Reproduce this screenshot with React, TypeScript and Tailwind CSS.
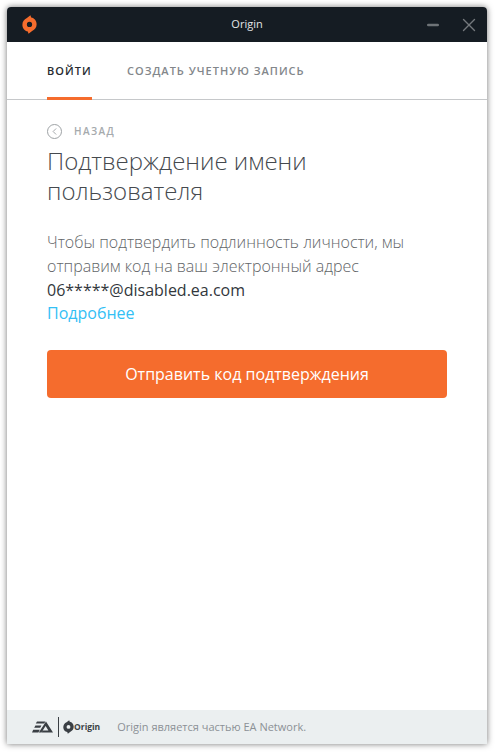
import { ChevronLeft, Minus, X } from "lucide-react"

function OriginLogo({ className, color }: { className: string; color: string }) {
  return (
    <svg viewBox="0 0 16 20" className={className} fill={color}>
      <path d="M9 0.2 L9.8 2.4 C13.2 3 15.6 6 15.6 9.6 C15.6 12.8 13.8 15.4 10.8 16.8 L7 19.8 L6.2 17.4 C2.8 16.8 0.4 13.8 0.4 10.2 C0.4 7 2.2 4.4 5.2 3 Z M8 7.1 A2.8 2.8 0 1 0 8 12.7 A2.8 2.8 0 1 0 8 7.1 Z" fillRule="evenodd" />
    </svg>
  )
}

function Footer() {
  return (
    <div className="flex h-[34px] items-center bg-[#ebeff0] pl-[25px]">
      <svg viewBox="0 0 21 12" className="h-[12px] w-[21px]" fill="#3a3f44">
        <path d="M5 0.5 H13.4 L12.2 2.6 H3.8 Z M3.4 4.6 H9.4 L8.2 6.7 H2.2 Z M1.2 8.8 H7.8 L6.4 11.5 H0 Z M14 0.5 L21 11.5 H9.6 L10.8 9.4 H16.4 L13.6 5 L9.4 11.5 H6.8 Z" />
      </svg>
      <div className="ml-[5px] h-[20px] w-px bg-[#3a3f44]" />
      <OriginLogo className="ml-[4px] h-[14px] w-[11px]" color="#3a3f44" />
      <span className="text-[8.5px] font-bold text-[#3a3f44]">Origin</span>
      <span className="ml-[17px] text-[11px] text-[#8b9196]">
        Origin является частью EA Network.
      </span>
    </div>
  )
}

export default function App() {
  return (
    <div className="h-[753px] w-[496px] bg-white pb-[9px] pl-[7px] pr-[9px] pt-[7px] font-['Open_Sans',sans-serif]">
      <div className="flex h-full flex-col overflow-hidden rounded-t-[4px] bg-white shadow-[0_0_6px_rgba(0,0,0,0.55)]">
        <div className="relative flex h-[35px] shrink-0 items-center bg-[#151c23]">
          <OriginLogo className="ml-[15px] h-[19px] w-[15px]" color="#f56c2d" />
          <span className="absolute inset-x-0 text-center text-[11px] text-[#e3e5e7]">Origin</span>
          <Minus className="absolute right-[46px] top-[10px] h-[16px] w-[16px] text-[#6e7377]" strokeWidth={4} />
          <X className="absolute right-[7px] top-[7px] h-[22px] w-[22px] text-[#75797d]" strokeWidth={1.5} />
        </div>

        <div className="flex h-[58px] shrink-0 gap-[35px] border-b border-[#c6c8ca] pl-[40px]">
          <div className="flex h-[58px] flex-col justify-between">
            <span className="pt-[21px] text-[11px] font-semibold leading-[16px] tracking-[1.05px] text-[#272b30]">ВОЙТИ</span>
            <div className="h-[3px] w-[45px] bg-[#f56c2d]" />
          </div>
          <span className="pt-[21px] text-[11px] font-semibold leading-[16px] tracking-[1px] text-[#83878b]">
            СОЗДАТЬ УЧЕТНУЮ ЗАПИСЬ
          </span>
        </div>

        <div className="flex-1 px-[40px] pt-[23px]">
          <div className="flex h-[16px] items-center">
            <div className="flex h-[15px] w-[15px] items-center justify-center rounded-full border border-[#9ea2a5]">
              <ChevronLeft className="h-[11px] w-[11px] text-[#9ea2a5]" strokeWidth={2} />
            </div>
            <span className="ml-[12px] text-[10px] font-semibold tracking-[1.4px] text-[#a6aaad]">НАЗАД</span>
          </div>
          <h1 className="mt-[7px] w-[320px] text-[24px] font-light leading-[30px] text-[#45494e]">
            Подтверждение имени пользователя
          </h1>
          <div className="mt-[25.4px] text-[16px] font-light leading-[23.6px] text-[#626568]">
            <p>Чтобы подтвердить подлинность личности, мы</p>
            <p>отправим код на ваш электронный адрес</p>
            <p className="font-normal text-[#32373c]">06*****@disabled.ea.com</p>
            <a className="font-normal text-[#33c0f5]">Подробнее</a>
          </div>
          <button className="mt-[24.2px] flex h-[48px] w-[400px] items-center justify-center rounded-[4px] bg-[#f56c2d] text-[16px] font-medium text-white">
            Отправить код подтверждения
          </button>
        </div>

        <Footer />
      </div>
    </div>
  )
}
